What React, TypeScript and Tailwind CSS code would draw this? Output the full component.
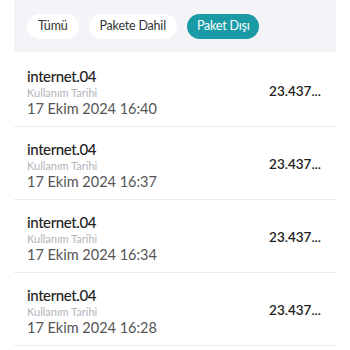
const filters = ["Tümü", "Pakete Dahil", "Paket Dışı"];

const usages = [
  { name: "internet.04", date: "17 Ekim 2024 16:40", amount: "23.437..." },
  { name: "internet.04", date: "17 Ekim 2024 16:37", amount: "23.437..." },
  { name: "internet.04", date: "17 Ekim 2024 16:34", amount: "23.437..." },
  { name: "internet.04", date: "17 Ekim 2024 16:28", amount: "23.437..." },
];

export default function App() {
  const active = "Paket Dışı";

  return (
    <div
      className="w-[350px] h-[350px] overflow-hidden bg-white"
      style={{ fontFamily: 'Lato, "Noto Sans", sans-serif' }}
    >
      {/* filtre çubuğu */}
      <div className="mx-[14px] h-[52px] bg-[#f3f3f8] flex items-center gap-[10px] px-[13px]">
        {filters.map((f) => (
          <button
            key={f}
            className={
              f === active
                ? "h-[25px] px-[10px] rounded-full bg-[#1a9aa5] text-white text-[12.5px] tracking-[-0.2px] leading-none"
                : "h-[25px] px-[11px] rounded-full bg-white text-[#333] text-[12.5px] tracking-[-0.2px] leading-none"
            }
          >
            {f}
          </button>
        ))}
      </div>

      {/* kullanım listesi */}
      <ul className="mx-[14px] mt-[2px]">
        {usages.map((u, i) => (
          <li
            key={i}
            className="h-[73px] border-b border-[#ececf0] flex items-center justify-between pl-[13px] pr-[15px] pt-[3px]"
          >
            <div className="flex flex-col">
              <span className="text-[15px] leading-[20px] font-medium tracking-[-0.4px] text-[#222]">{u.name}</span>
              <span className="text-[11px] leading-[14px] text-[#b4b4bc]">Kullanım Tarihi</span>
              <span className="text-[14.5px] leading-[18px] text-[#555]">{u.date}</span>
            </div>
            <span className="text-[13.5px] font-semibold text-[#222]">{u.amount}</span>
          </li>
        ))}
      </ul>
    </div>
  );
}
